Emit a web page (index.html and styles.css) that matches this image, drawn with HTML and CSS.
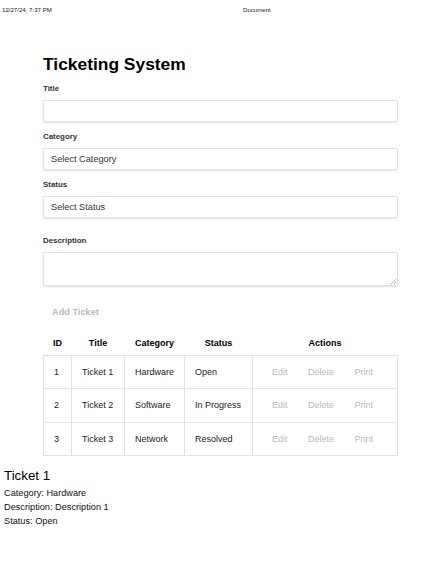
FILE: index.html
```html
<!DOCTYPE html>
<html lang="en">
<head>
<meta charset="utf-8">
<title>Document</title>
<link rel="stylesheet" href="styles.css">
</head>
<body>
<header class="print-header">
  <span class="print-date">12/27/24, 7:37 PM</span>
  <span class="print-title">Document</span>
</header>
<main class="container">
  <h1 class="page-title">Ticketing System</h1>
  <form class="ticket-form">
    <div class="form-group">
      <label class="form-label">Title</label>
      <div class="form-control"></div>
    </div>
    <div class="form-group">
      <label class="form-label">Category</label>
      <div class="form-control">Select Category</div>
    </div>
    <div class="form-group group-status">
      <label class="form-label">Status</label>
      <div class="form-control">Select Status</div>
    </div>
    <div class="form-group">
      <label class="form-label">Description</label>
      <div class="form-control textarea">
        <svg class="resize" width="6" height="6" viewBox="0 0 6 6"><path d="M6 1L1 6M6 4L4 6" stroke="#999" stroke-width="0.8"/></svg>
      </div>
    </div>
    <button type="button" class="add-btn">Add Ticket</button>
  </form>
  <table class="ticket-table">
    <colgroup>
      <col style="width:28px"><col style="width:53px"><col style="width:60px"><col style="width:68px"><col>
    </colgroup>
    <thead>
      <tr><th>ID</th><th>Title</th><th>Category</th><th>Status</th><th>Actions</th></tr>
    </thead>
    <tbody>
      <tr><td>1</td><td>Ticket 1</td><td>Hardware</td><td>Open</td><td class="actions"><button class="act">Edit</button><button class="act">Delete</button><button class="act">Print</button></td></tr>
      <tr><td>2</td><td>Ticket 2</td><td>Software</td><td>In Progress</td><td class="actions"><button class="act">Edit</button><button class="act">Delete</button><button class="act">Print</button></td></tr>
      <tr><td>3</td><td>Ticket 3</td><td>Network</td><td>Resolved</td><td class="actions"><button class="act">Edit</button><button class="act">Delete</button><button class="act">Print</button></td></tr>
    </tbody>
  </table>
</main>
<section class="print-view">
  <h2 class="pv-title">Ticket 1</h2>
  <p class="pv-line">Category: Hardware</p>
  <p class="pv-line">Description: Description 1</p>
  <p class="pv-line">Status: Open</p>
</section>
</body>
</html>
```
FILE: styles.css
```css
* { box-sizing: border-box; }
html, body {
  margin: 0;
  padding: 0;
  background: #fff;
  font-family: "Liberation Sans", Arial, sans-serif;
  color: #222;
}
.print-header {
  display: grid;
  grid-template-columns: 241px 1fr;
  padding: 6px 0 0 2px;
  height: 18px;
  font-size: 6.1px;
  line-height: 7px;
  color: #222;
}
.container {
  width: 355px;
  margin-left: 43px;
}
.page-title {
  margin: 36px 0 0;
  font-size: 17.4px;
  line-height: 20px;
  font-weight: bold;
  color: #000;
}
.ticket-form {
  display: flex;
  flex-direction: column;
  margin-top: 10px;
}
.form-group {
  display: flex;
  flex-direction: column;
  margin-bottom: 10px;
}
.group-status { margin-bottom: 18px; }
.form-label {
  font-size: 7.9px;
  line-height: 10px;
  font-weight: bold;
  color: #333;
  margin-bottom: 6px;
}
.form-control {
  position: relative;
  height: 22px;
  border: 1px solid #e2e2e2;
  border-radius: 2px;
  box-shadow: 0 1px 2px rgba(0,0,0,0.12);
  padding: 0 7px;
  font-size: 9.2px;
  line-height: 20px;
  color: #333;
}
.form-control.textarea { height: 34px; }
.resize {
  position: absolute;
  right: 1px;
  bottom: 1px;
}
.add-btn {
  align-self: flex-start;
  margin-top: 5px;
  padding: 6px 9px;
  border: none;
  background: none;
  font-family: inherit;
  font-size: 9.2px;
  line-height: 11px;
  font-weight: bold;
  color: #bbb;
}
.ticket-table {
  width: 355px;
  margin-top: 7px;
  border-collapse: collapse;
  table-layout: fixed;
  font-size: 9px;
}
.ticket-table th {
  padding: 7px 0 6px;
  line-height: 11px;
  font-weight: bold;
  color: #000;
  text-align: center;
}
.ticket-table td {
  border: 1px solid #e4e4e4;
  padding: 10px 10px;
  height: 33.3px;
  line-height: 12px;
  color: #222;
  text-align: left;
  white-space: nowrap;
}
.act {
  padding: 0 9px;
  border: none;
  background: none;
  font-family: inherit;
  font-size: 9px;
  line-height: 12px;
  color: #bbb;
  margin-right: 2.5px;
}
.print-view {
  padding: 12px 0 0 4px;
}
.pv-title {
  margin: 0 0 2px;
  font-size: 13.3px;
  line-height: 16px;
  font-weight: normal;
  color: #000;
}
.pv-line {
  margin: 0;
  font-size: 9.2px;
  line-height: 14px;
  color: #111;
}
```
